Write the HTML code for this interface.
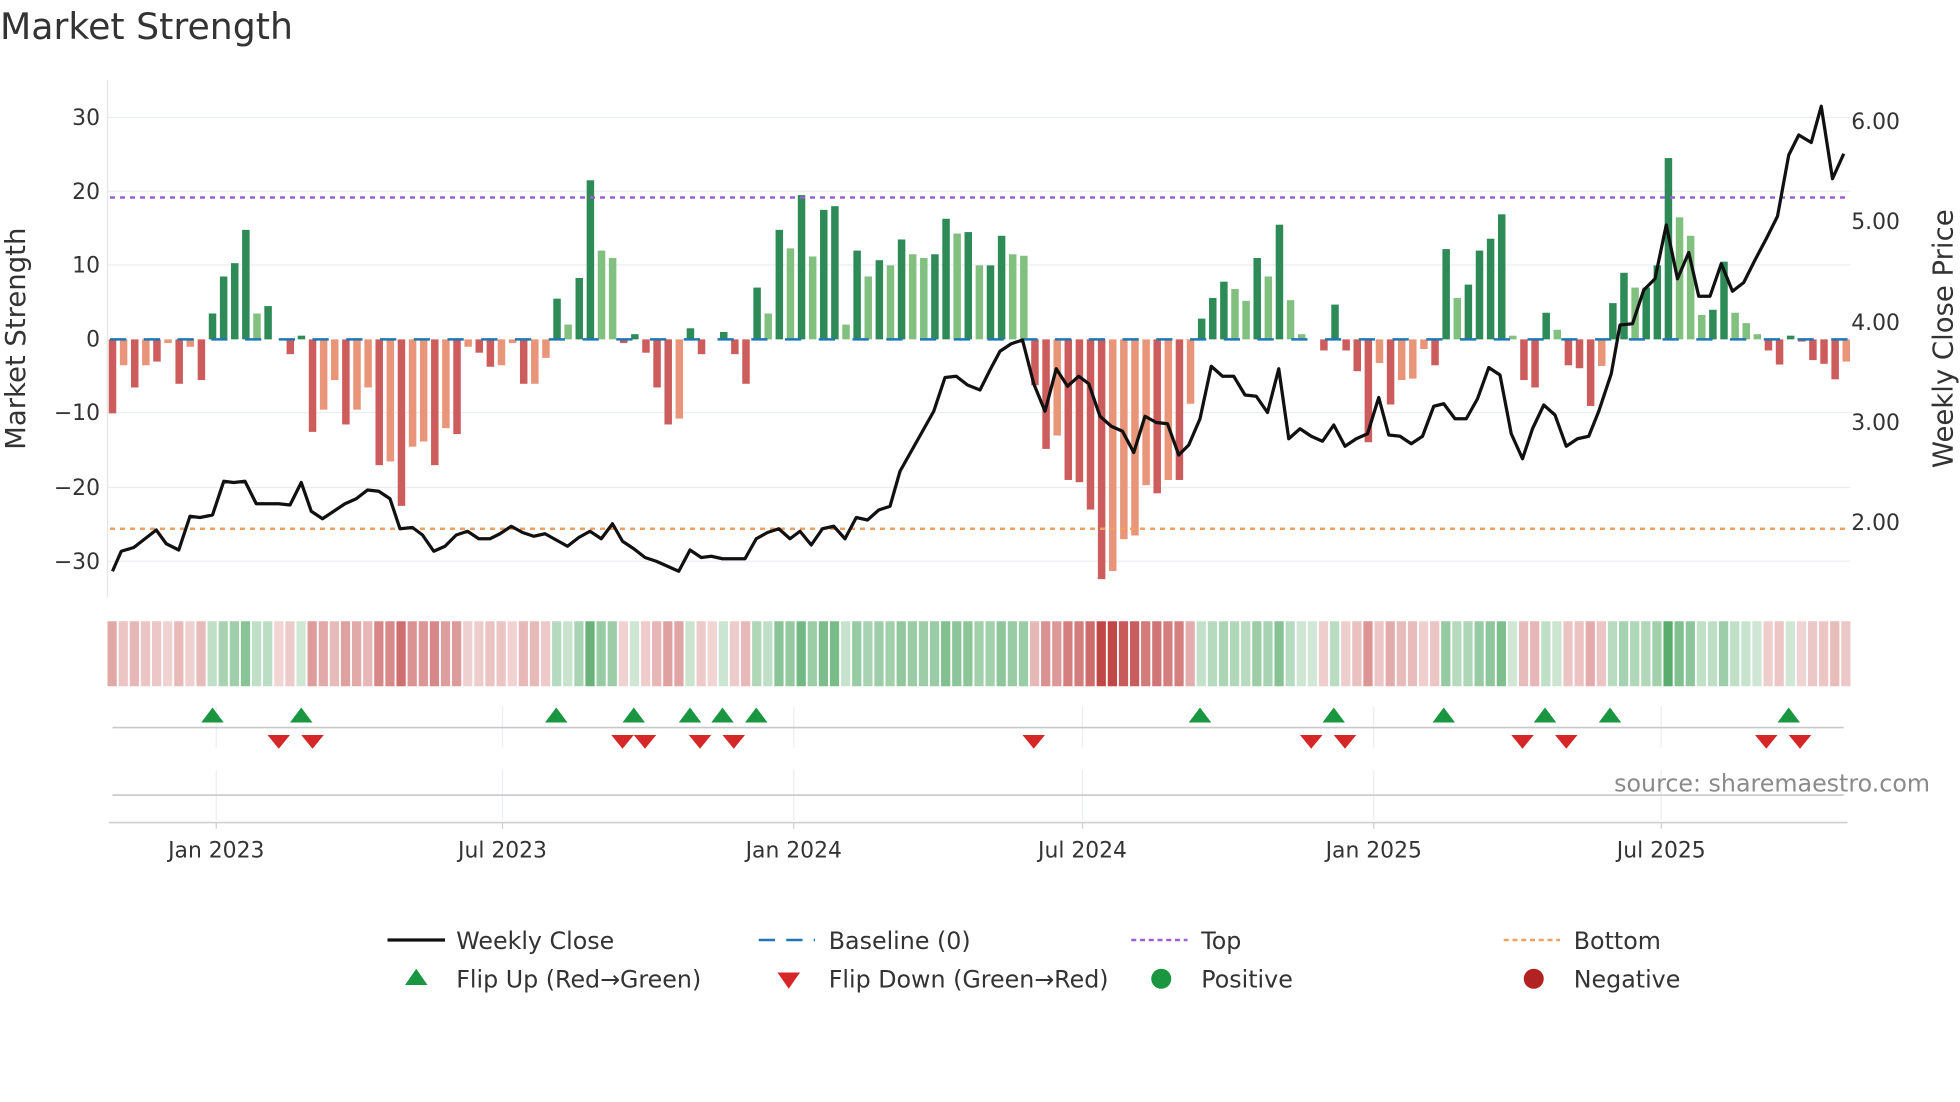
<!DOCTYPE html>
<html><head><meta charset="utf-8"><style>
html,body{margin:0;padding:0;background:#fff;}
svg{display:block;font-family:"DejaVu Sans","Liberation Sans",sans-serif;}
</style></head><body>
<svg id="s" width="1960" height="1102" viewBox="0 0 1568 881.6" xmlns="http://www.w3.org/2000/svg">
<rect width="1568" height="882" fill="#fff"/>
<text x="0" y="31" font-size="29" fill="#333">Market Strength</text>
<g id="grid" stroke="#ebedf0" stroke-width="1">
<line x1="86" y1="94" x2="1480" y2="94"/><line x1="86" y1="153" x2="1480" y2="153"/>
<line x1="86" y1="212" x2="1480" y2="212"/><line x1="86" y1="330" x2="1480" y2="330"/>
<line x1="86" y1="390" x2="1480" y2="390"/><line x1="86" y1="449" x2="1480" y2="449"/>
</g>
<line x1="86" y1="64" x2="86" y2="478" stroke="#e3e5e8" stroke-width="1"/>
<g font-size="17.5" fill="#333" text-anchor="end">
<text x="80" y="100">30</text><text x="80" y="159">20</text><text x="80" y="218">10</text>
<text x="80" y="277">0</text><text x="80" y="336">−10</text><text x="80" y="396">−20</text><text x="80" y="455">−30</text>
</g>
<g font-size="17.5" fill="#333">
<text x="1481" y="103">6.00</text><text x="1481" y="183">5.00</text><text x="1481" y="264">4.00</text>
<text x="1481" y="344">3.00</text><text x="1481" y="424">2.00</text>
</g>
<text transform="translate(20,271) rotate(-90)" text-anchor="middle" font-size="22" fill="#333">Market Strength</text>
<text transform="translate(1562,271) rotate(-90)" text-anchor="middle" font-size="22" fill="#333">Weekly Close Price</text>
<g id="bars"></g>
<line x1="88" y1="271.5" x2="1478" y2="271.5" stroke="#1f77b4" stroke-width="2" stroke-dasharray="13 14"/>
<line x1="88" y1="158" x2="1478" y2="158" stroke="#9b5fd6" stroke-width="2" stroke-dasharray="4 4"/>
<line x1="88" y1="423" x2="1478" y2="423" stroke="#f0a060" stroke-width="2" stroke-dasharray="4 4"/>
<polyline id="pl" fill="none" stroke="#111" stroke-width="2.6" stroke-linejoin="round"/>
<g id="strip"></g>
<g stroke="#ebedf0" stroke-width="1">
<line x1="173" y1="565" x2="173" y2="598"/><line x1="402" y1="565" x2="402" y2="598"/><line x1="635" y1="565" x2="635" y2="598"/>
<line x1="866" y1="565" x2="866" y2="598"/><line x1="1099" y1="565" x2="1099" y2="598"/><line x1="1329" y1="565" x2="1329" y2="598"/>
<line x1="173" y1="616" x2="173" y2="656"/><line x1="402" y1="616" x2="402" y2="656"/><line x1="635" y1="616" x2="635" y2="656"/>
<line x1="866" y1="616" x2="866" y2="656"/><line x1="1099" y1="616" x2="1099" y2="656"/><line x1="1329" y1="616" x2="1329" y2="656"/>
</g>
<line x1="90" y1="582" x2="1475" y2="582" stroke="#c8c8c8" stroke-width="1.3"/>
<line x1="90" y1="636" x2="1475" y2="636" stroke="#c8c8c8" stroke-width="1.3"/>
<g id="tri"></g>
<text x="1544" y="633" font-size="19" fill="#8a8a8a" text-anchor="end">source: sharemaestro.com</text>
<line x1="87" y1="658" x2="1478" y2="658" stroke="#cfcfcf" stroke-width="1.3"/>
<g stroke="#cfcfcf"><line x1="173" y1="658" x2="173" y2="663"/><line x1="402" y1="658" x2="402" y2="663"/><line x1="635" y1="658" x2="635" y2="663"/><line x1="866" y1="658" x2="866" y2="663"/><line x1="1099" y1="658" x2="1099" y2="663"/><line x1="1329" y1="658" x2="1329" y2="663"/></g>
<g font-size="17.5" fill="#333" text-anchor="middle">
<text x="173" y="686">Jan 2023</text><text x="402" y="686">Jul 2023</text><text x="635" y="686">Jan 2024</text>
<text x="866" y="686">Jul 2024</text><text x="1099" y="686">Jan 2025</text><text x="1329" y="686">Jul 2025</text>
</g>
<g font-size="19" fill="#333">
<line x1="310" y1="752" x2="356" y2="752" stroke="#111" stroke-width="2.6"/><text x="365" y="759">Weekly Close</text>
<line x1="607" y1="752" x2="652" y2="752" stroke="#1f77b4" stroke-width="2" stroke-dasharray="13 9"/><text x="663" y="759">Baseline (0)</text>
<line x1="905" y1="752" x2="950" y2="752" stroke="#9b5fd6" stroke-width="2" stroke-dasharray="4 3"/><text x="961" y="759">Top</text>
<line x1="1203" y1="752" x2="1248" y2="752" stroke="#f0a060" stroke-width="2" stroke-dasharray="4 3"/><text x="1259" y="759">Bottom</text>
<polygon points="324,788 342,788 333,775" fill="#1a9641"/><text x="365" y="790">Flip Up (Red→Green)</text>
<polygon points="622,778 640,778 631,791" fill="#d62728"/><text x="663" y="790">Flip Down (Green→Red)</text>
<circle cx="929" cy="783" r="8" fill="#1a9641"/><text x="961" y="790">Positive</text>
<circle cx="1227" cy="783" r="8" fill="#b22222"/><text x="1259" y="790">Negative</text>
</g>
</svg>
<script>
var d="R-10 r-3.5 R-6.5 r-3.5 R-3 r-0.5 R-6 r-1 R-5.5 G3.5 G8.5 G10.3 G14.8 g3.5 G4.5 R0 R-2 G0.5 R-12.5 r-9.5 r-5.5 R-11.5 r-9.5 r-6.5 R-17 r-16.5 R-22.5 r-14.5 r-13.8 R-17 r-12 R-12.8 r-1 R-1.8 R-3.7 r-3.5 r-0.5 R-6 r-6 r-2.5 G5.5 g2 G8.3 G21.5 g12 g11 R-0.5 G0.7 R-1.8 R-6.5 R-11.5 r-10.7 G1.5 R-2 R0 G1 R-2 R-6 G7 g3.5 G14.8 g12.3 G19.5 g11.2 G17.5 G18 g2 G12 g8.5 G10.7 g10 G13.5 g11.5 g11 G11.5 G16.3 g14.3 G14.5 g10 G10 G14 g11.5 g11.3 R-6.2 R-14.8 r-13 R-19 R-19.3 R-23 R-32.4 r-31.3 r-27 r-26.5 r-19.7 R-20.8 r-19 R-19 r-8.7 G2.8 G5.6 G7.8 g6.8 g5.2 G11 g8.5 G15.5 g5.3 g0.7 G0 R-1.5 G4.7 R-1.5 R-4.3 R-13.9 r-3.2 R-8.8 r-5.5 r-5.3 r-1.3 R-3.5 G12.2 g5.6 G7.4 G12 G13.6 G16.9 g0.5 R-5.5 R-6.5 G3.6 g1.3 R-3.5 R-3.9 R-9 r-3.6 G4.9 G9 g7 G7 G10 G24.5 g16.5 g14 g3.3 G4 G10.5 g3.6 g2.2 g0.7 R-1.5 R-3.4 G0.5 R-0.3 R-2.8 R-3.3 R-5.4 r-3".split(" ");
var col={G:"#2e8b57",g:"#82c080",R:"#cd5c5c",r:"#e8957a"};
var NS="http://www.w3.org/2000/svg",B=document.getElementById("bars"),S=document.getElementById("strip");
function el(p,t,a){var e=document.createElementNS(NS,t);for(var k in a)e.setAttribute(k,a[k]);p.appendChild(e);return e;}
var pitch=(1477-90)/156;
d.forEach(function(s,i){var c=s[0],v=parseFloat(s.slice(1)),x=90+i*pitch;
 if(Math.abs(v)>0.05){var h=Math.abs(v)*5.92;el(B,"rect",{x:x-3,y:v>0?271.5-h:271.5,width:6,height:h,fill:col[c]});}
 var a=Math.min(0.22+Math.abs(v)/28*0.65,0.95),pos=(c=="G"||c=="g");
 var base=pos?[46,150,70]:[190,60,60];
 var r=Math.round(255-(255-base[0])*a),g=Math.round(255-(255-base[1])*a),b=Math.round(255-(255-base[2])*a);
 el(S,"rect",{x:x-4,y:497,width:7.4,height:52,fill:"rgb("+r+","+g+","+b+")"});
});
var pts="90,457 97,441 107,438 116,431 125,424 133,435 143,440 152,413 160,414 170,412 179,385 187,386 196,385 205,403 214,403 223,403 232,404 241,386 249,409 258,415 267,409 276,403 285,399 294,392 303,393 312,399 320,423 330,422 338,428 347,441 356,437 365,428 374,425 383,431 392,431 400,427 409,421 418,426 427,429 436,427 445,432 454,437 463,430 472,425 481,431 490,419 498,433 507,439 516,446 525,449 534,453 543,457 552,440 561,446 569,445 578,447 587,447 596,447 605,431 614,426 623,423 632,431 640,425 649,436 658,423 667,421 676,431 685,414 694,416 703,408 712,405 720,377 729,361 738,345 747,329 756,302 765,301 774,308 784,312 792,296 800,281 809,275 818,272 827,307 836,329 845,295 854,309 863,301 871,307 880,333 889,341 898,345 907,362 916,333 925,338 934,339 943,364 951,356 960,335 969,293 978,301 987,301 996,316 1005,317 1014,330 1023,295 1031,351 1040,343 1049,349 1058,353 1067,340 1076,357 1085,351 1094,347 1103,318 1111,348 1120,349 1129,355 1138,349 1147,325 1155,323 1164,335 1173,335 1182,319 1191,294 1200,300 1209,347 1218,367 1226,343 1235,324 1244,332 1253,357 1262,351 1271,349 1279,329 1289,299 1296,260 1306,259 1315,232 1324,223 1333,180 1342,223 1351,202 1359,237 1368,237 1377,211 1386,233 1395,226 1404,208 1413,191 1422,173 1431,124 1439,108 1449,114 1457,85 1466,143 1475,123";
document.getElementById("pl").setAttribute("points",pts);
var T=document.getElementById("tri");
[170,241,445,507,552,578,605,960,1067,1155,1236,1288,1431].forEach(function(x){el(T,"polygon",{points:(x-9)+",578 "+(x+9)+",578 "+x+",566",fill:"#1a9641"});});
[223,250,498,516,560,587,827,1049,1076,1218,1253,1413,1440].forEach(function(x){el(T,"polygon",{points:(x-9)+",588 "+(x+9)+",588 "+x+",599",fill:"#d62728"});});
</script>
</body></html>
